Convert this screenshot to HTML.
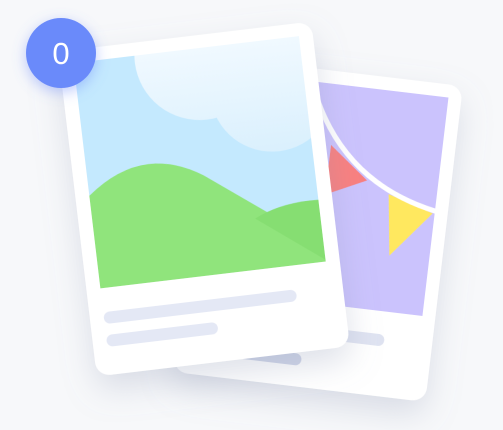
<!DOCTYPE html>
<html><head><style>
html,body{margin:0;padding:0;background:#f7f8fa;width:503px;height:430px;overflow:hidden}
svg{display:block}
</style></head><body>
<svg width="503" height="430" viewBox="0 0 503 430" xmlns="http://www.w3.org/2000/svg">
<defs>
<filter id="sh" x="-30%" y="-30%" width="160%" height="170%"><feDropShadow dx="0" dy="14" stdDeviation="16" flood-color="#8a93b0" flood-opacity="0.28"/></filter>
<filter id="bg" x="-60%" y="-60%" width="220%" height="220%"><feDropShadow dx="0" dy="4" stdDeviation="7" flood-color="#6b8afa" flood-opacity="0.45"/></filter>
<clipPath id="img1"><rect x="14" y="13" width="227" height="227"/></clipPath>
<clipPath id="img2"><rect x="13" y="13" width="228" height="220"/></clipPath>
<linearGradient id="pg" x1="0" x2="1"><stop offset="0" stop-color="#bdb6f2"/><stop offset="0.5" stop-color="#cbc3fd"/><stop offset="1" stop-color="#cbc3fd"/></linearGradient>
<linearGradient id="cg" gradientUnits="userSpaceOnUse" x1="0" y1="13" x2="0" y2="125"><stop offset="0" stop-color="#f0f9ff"/><stop offset="1" stop-color="#daf0fd"/></linearGradient>
</defs>
<g transform="translate(191,70) rotate(6.8 127 159)" filter="url(#sh)">
  <rect x="0" y="0" width="254" height="318" rx="14" fill="#fff"/>
  <g clip-path="url(#img2)">
    <rect x="13" y="13" width="228" height="220" fill="url(#pg)"/>
    <path d="M130 74 L130 124 L170 105 Z" fill="#f88080"/>
    <path d="M193 116 L201 177 L239 130 Z" fill="#ffe85f"/>
    <path d="M110 28 Q150 112 245 128" stroke="#fff" stroke-width="5" fill="none"/>
  </g>
  <rect x="14" y="256" width="192" height="12" rx="6" fill="#dfe3f1"/>
  <rect x="14" y="285" width="112" height="12" rx="6" fill="#cfd5e8"/>
</g>
<g transform="translate(76.5,35.5) rotate(-6.8 127.5 163.5)" filter="url(#sh)">
  <rect x="0" y="0" width="255" height="327" rx="14" fill="#fff"/>
  <g clip-path="url(#img1)">
    <rect x="14" y="13" width="227" height="227" fill="#c4e9fe"/>
    <g fill="url(#cg)">
      <circle cx="140" cy="20" r="65"/>
      <circle cx="208" cy="63" r="62"/>
    </g>
    <path d="M10 150 Q70 100 130 140 L190 185 L250 245 L10 245 Z" fill="#90e47c"/>
    <path d="M176 189 Q205 175 245 178 L245 245 L250 245 Z" fill="#86de72"/>
  </g>
  <rect x="14" y="264" width="194" height="12" rx="6" fill="#e4e8f5"/>
  <rect x="14" y="287" width="112" height="12" rx="6" fill="#e4e8f5"/>
</g>
<circle cx="61" cy="53" r="35" fill="#6b8afa" filter="url(#bg)"/>
<text x="61" y="64" text-anchor="middle" font-family="Liberation Sans, sans-serif" font-size="31" fill="#fff">0</text>
</svg>
</body></html>
